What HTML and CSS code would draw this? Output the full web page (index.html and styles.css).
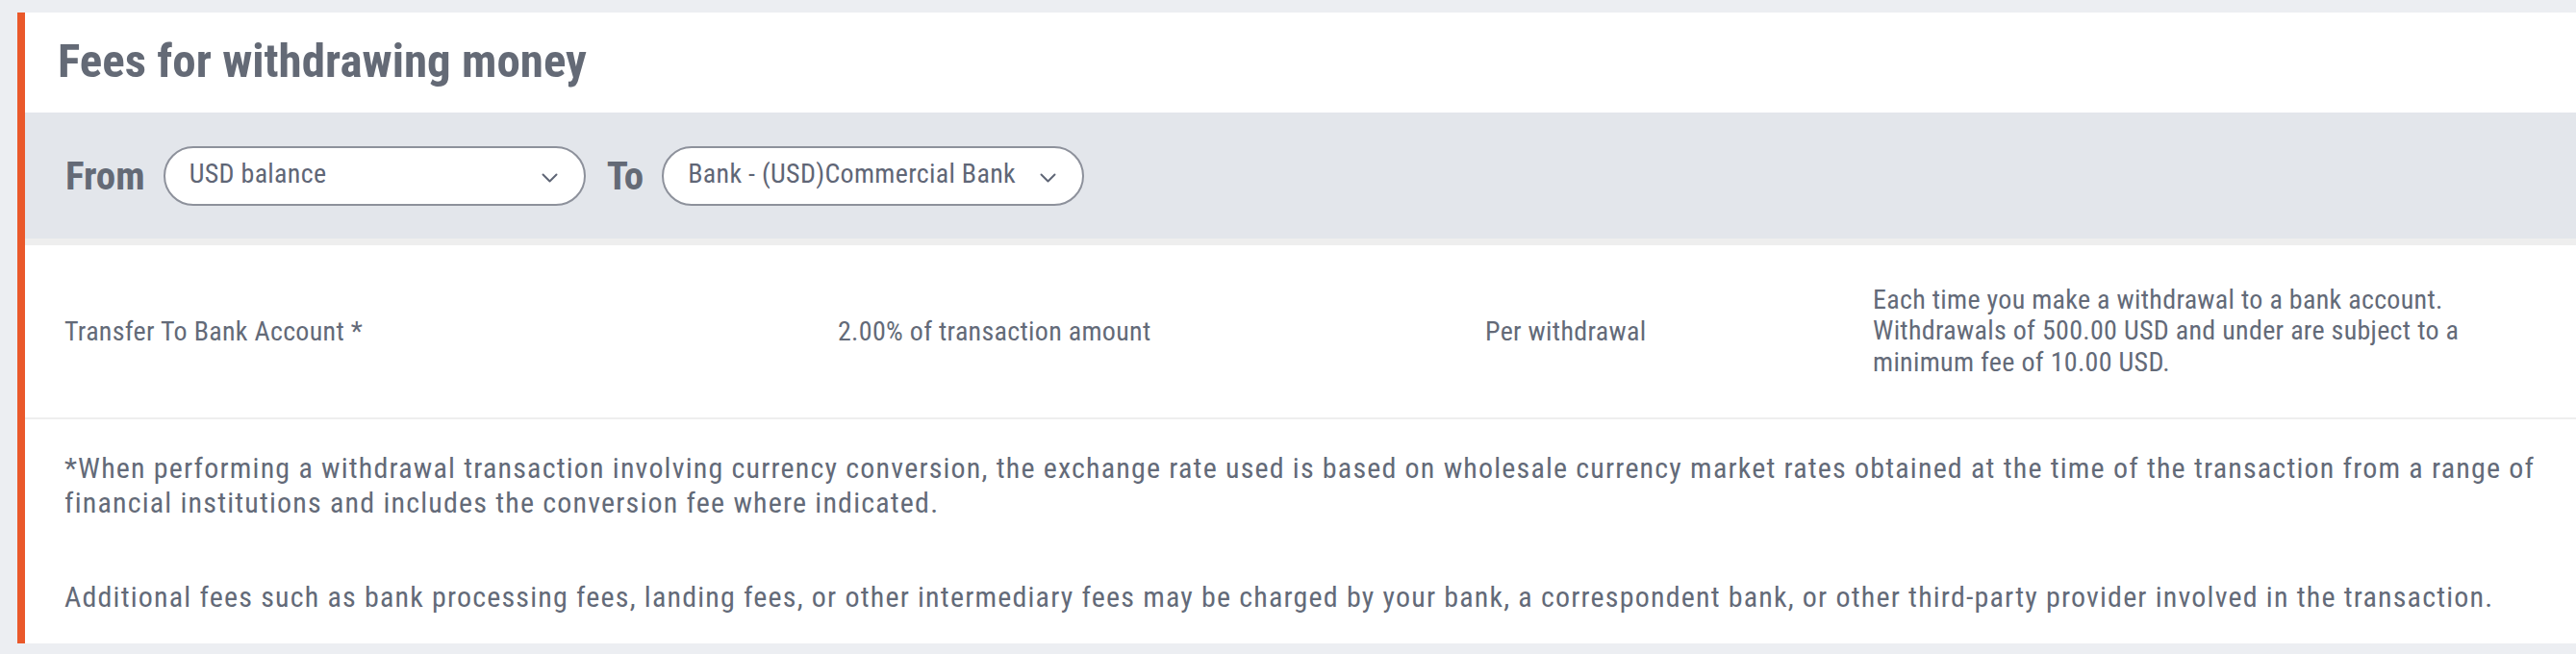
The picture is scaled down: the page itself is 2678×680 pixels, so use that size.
FILE: index.html
```html
<!DOCTYPE html>
<html lang="en">
<head>
<meta charset="utf-8">
<title>Fees for withdrawing money</title>
<link rel="stylesheet" href="styles.css">
</head>
<body>
<div class="page">
  <section class="card">
    <header class="card-head">
      <h1 class="title">Fees for withdrawing money</h1>
    </header>
    <div class="filters">
      <span class="filter-label">From</span>
      <div class="select">
        <span class="select-text">USD balance</span>
        <svg class="chev" width="17" height="10" viewBox="0 0 17 10"><polyline points="1.5,1.5 8.5,8.5 15.5,1.5" fill="none" stroke="#5f6676" stroke-width="2" stroke-linecap="round" stroke-linejoin="round"/></svg>
      </div>
      <span class="filter-label">To</span>
      <div class="select">
        <span class="select-text">Bank - (USD)Commercial Bank</span>
        <svg class="chev" width="17" height="10" viewBox="0 0 17 10"><polyline points="1.5,1.5 8.5,8.5 15.5,1.5" fill="none" stroke="#5f6676" stroke-width="2" stroke-linecap="round" stroke-linejoin="round"/></svg>
      </div>
    </div>
    <div class="fee-row">
      <div class="cell">Transfer To Bank Account *</div>
      <div class="cell">2.00% of transaction amount</div>
      <div class="cell">Per withdrawal</div>
      <div class="cell desc">Each time you make a withdrawal to a bank account. Withdrawals of 500.00 USD and under are subject to a minimum fee of 10.00 USD.</div>
    </div>
    <div class="notes">
      <p class="note">*When performing a withdrawal transaction involving currency conversion, the exchange rate used is based on wholesale currency market rates obtained at the time of the transaction from a range of financial institutions and includes the conversion fee where indicated.</p>
      <p class="note">Additional fees such as bank processing fees, landing fees, or other intermediary fees may be charged by your bank, a correspondent bank, or other third-party provider involved in the transaction.</p>
    </div>
  </section>
</div>
</body>
</html>
```

FILE: styles.css
```css
html, body {
  margin: 0;
  padding: 0;
}
body {
  background: #eceef2;
  font-family: "Roboto Condensed", Roboto, "Liberation Sans", sans-serif;
  font-stretch: condensed;
  color: #636a78;
}
.page {
  padding: 13px 0 10px 18px;
}
.card {
  background: #ffffff;
  border-left: 8px solid #ea582a;
}
.card-head {
  height: 104px;
  display: flex;
  align-items: center;
  padding-left: 34px;
}
.title {
  margin: 0;
  font-size: 49px;
  font-weight: 700;
  color: #646a76;
  line-height: 1;
  padding-bottom: 4px;
}
.filters {
  height: 131px;
  background: #e3e6eb;
  border-bottom: 7px solid #eeeeee;
  display: flex;
  align-items: center;
  padding-left: 42px;
}
.filter-label {
  font-size: 41px;
  font-weight: 700;
  color: #646a76;
  margin-right: 19px;
}
.select {
  box-sizing: border-box;
  width: 439px;
  height: 62px;
  border: 2px solid #8d919b;
  border-radius: 31px;
  background: #fff;
  display: flex;
  align-items: center;
  justify-content: space-between;
  padding: 0 27px 0 25px;
  margin-right: 22px;
}
.select-text {
  font-size: 28px;
  color: #5f6676;
  letter-spacing: 0.3px;
  padding-bottom: 4px;
}
.chev {
  margin-top: 4px;
}
.fee-row {
  display: grid;
  grid-template-columns: 804px 673px 403px 1fr;
  align-items: center;
  min-height: 179px;
  padding: 0 80px 0 41px;
  border-bottom: 2px solid #eeeeee;
  font-size: 28px;
  letter-spacing: 0.3px;
}
.cell {
  color: #636a78;
}
.desc {
  line-height: 32.5px;
  padding-right: 40px;
}
.notes {
  padding: 33px 28px 30px 41px;
}
.note {
  margin: 0;
  font-size: 30px;
  line-height: 36px;
  letter-spacing: 1.18px;
  color: #636a78;
}
.note + .note {
  margin-top: 62px;
}
```
